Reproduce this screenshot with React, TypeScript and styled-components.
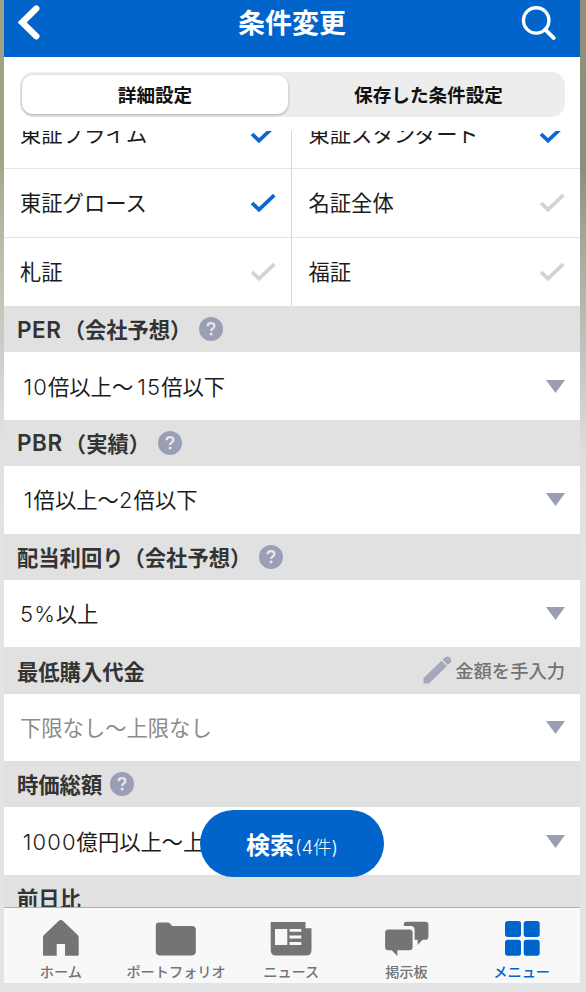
import React from 'react';
import styled, { createGlobalStyle } from 'styled-components';

const GlobalStyle = createGlobalStyle`
  *, *::before, *::after { box-sizing: border-box; }
  body {
    margin: 0;
    font-family: "Noto Sans CJK JP", sans-serif;
    color: #1c1c1c;
    overflow: hidden;
  }
`;

const Backdrop = styled.div`
  display: flex;
  justify-content: center;
  width: 586px;
  height: 992px;
  padding: 0 6px 9px 4px;
  background:
    linear-gradient(#a0a183 0, #a0a183 150px, #b4bba4 230px, #c6cdc4 340px, #dfe1e0 430px, rgba(226, 227, 228, 0) 560px) left / 4px 100% no-repeat,
    linear-gradient(#8d927d 0, #8b907c 170px, #a3a999 240px, #bec2ba 345px, #dddedc 450px, rgba(226, 227, 228, 0) 560px) right / 6px 100% no-repeat,
    #e3e4e5;
`;

const Phone = styled.div`
  position: relative;
  display: flex;
  flex-direction: column;
  width: 576px;
  height: 983px;
  background: #fff;
  overflow: hidden;
`;

const Header = styled.header`
  display: grid;
  grid-template-columns: 60px 1fr 60px;
  align-items: center;
  flex: none;
  height: 57px;
  padding-bottom: 12px;
  background: #0064cb;
  color: #fff;
`;

const Title = styled.h1`
  margin: 0;
  font-size: 27px;
  line-height: 43px;
  padding-bottom: 2px;
  font-weight: 700;
  text-align: center;
`;

const HeaderButton = styled.button<{ $end?: boolean }>`
  display: flex;
  justify-content: ${p => (p.$end ? 'flex-end' : 'flex-start')};
  height: 45px;
  padding: ${p => (p.$end ? '0 24px 0 0' : '0 0 0 14px')};
  border: 0;
  background: none;
  color: inherit;
`;

const Segments = styled.div`
  display: grid;
  grid-template-columns: 266px 1fr;
  flex: none;
  width: 545px;
  height: 45px;
  margin: 15px 0 14px 16px;
  padding: 3px 2px;
  border-radius: 14px;
  background: #ededed;
`;

const Segment = styled.button<{ $active?: boolean }>`
  height: 39px;
  padding: ${p => (p.$active ? '0 0 1px' : '0 0 1px 6px')};
  border: 0;
  border-radius: 11px;
  background: ${p => (p.$active ? '#fff' : 'transparent')};
  box-shadow: ${p => (p.$active ? '0 1px 3px rgba(0, 0, 0, 0.3)' : 'none')};
  color: #111;
  font: 700 18.6px/38px "Noto Sans CJK JP", sans-serif;
  text-align: center;
`;

const Conditions = styled.main`
  flex: 1;
  min-height: 0;
  overflow: hidden;
`;

const Scrolled = styled.div`
  margin-top: -31px;
`;

const Markets = styled.div`
  display: grid;
  grid-template-columns: 288px 1fr;
  grid-template-rows: 69px 69px 68px;
`;

const Market = styled.div`
  display: flex;
  align-items: center;
  justify-content: space-between;
  padding: 0 15px 1px 16px;
  border-bottom: 1px solid #e4e4e4;
  font-size: 21.3px;
  line-height: 32px;

  &:nth-child(odd) { border-right: 1px solid #d6d6d6; }
  &:nth-child(even) { padding-left: 16.5px; }
  &:nth-last-child(-n + 2) { border-bottom: 0; }
`;

const MarketName = styled.span`
  padding-bottom: 1px;
`;

const SectionHead = styled.h2`
  display: flex;
  align-items: center;
  height: 46.3px;
  margin: 0;
  padding: 0 15px 0 13px;
  background: #e1e1e1;
  color: #333;
  font-size: 21.3px;
  line-height: 32px;
  font-weight: 700;
`;

const Code = styled.span`
  margin-right: 2px;
  padding-top: 1px;
  font-family: Inter, "Noto Sans CJK JP", sans-serif;
  font-size: 22.5px;
  font-weight: 600;
  letter-spacing: 0.6px;
`;

const Digits = styled.span<{ $width: number }>`
  display: inline-block;
  width: ${p => p.$width}px;
  font-family: Inter, "Noto Sans CJK JP", sans-serif;
  font-size: 22px;
  font-weight: 300;
  letter-spacing: 1.1px;
  text-align: right;
  white-space: nowrap;
`;

const HelpIcon = styled.svg`
  flex: none;
  margin-left: 8px;
`;

const ManualEntry = styled.span`
  display: flex;
  align-items: center;
  gap: 3px;
  margin-left: auto;
  padding-bottom: 1px;
  color: #737373;
  font-size: 18.3px;
  font-weight: 500;
`;

const Value = styled.div<{ $muted?: boolean }>`
  display: flex;
  align-items: center;
  justify-content: space-between;
  height: 67.5px;
  padding: 0 15px 0 16px;
  color: ${p => (p.$muted ? '#8c8c8c' : '#1c1c1c')};
  font-size: 21.3px;
  line-height: 32px;
`;

const SearchButton = styled.button`
  position: absolute;
  left: 196px;
  top: 810px;
  display: flex;
  align-items: baseline;
  justify-content: center;
  width: 184px;
  height: 67px;
  padding: 0;
  border: 0;
  border-radius: 34px;
  background: #0064cb;
  color: #fff;
  font: 700 24px/67px "Noto Sans CJK JP", sans-serif;
`;

const Count = styled.span`
  margin-left: 1px;
  font-family: Inter, "Noto Sans CJK JP", sans-serif;
  font-size: 18.5px;
  font-weight: 300;
`;

const TabBar = styled.nav`
  display: grid;
  grid-template-columns: repeat(5, 1fr);
  flex: none;
  height: 76px;
  border-top: 1px solid #aeaeae;
  background: #f8f8f8;
`;

const Tab = styled.a<{ $active?: boolean }>`
  display: flex;
  flex-direction: column;
  align-items: center;
  padding-top: 11px;
  color: ${p => (p.$active ? '#0064cb' : '#747474')};
  font-size: 14.2px;
  line-height: 20px;
  font-weight: 500;
  white-space: nowrap;
`;

const TabIcon = styled.svg`
  display: block;
  flex: none;
  margin-bottom: 3px;
  overflow: visible;
`;

const TabLabel = styled.span`
  margin-right: 1.5px;
`;

const Check = ({ on }: { on: boolean }) => (
  <svg width="26" height="20" viewBox="0 0 26 20" fill="none">
    <path d="M2 10L9 16.7L24.3 2.2" stroke={on ? '#0a68d2' : '#d3d3d3'} strokeWidth="3.7" />
  </svg>
);

const Help = () => (
  <HelpIcon width="24" height="24" viewBox="0 0 24 24">
    <circle cx="12" cy="12" r="12" fill="#9a9fb6" />
    <path d="M8.6 9.2C8.7 7.1 10 6.1 12 6.1s3.4 1.1 3.4 2.9c0 2.4-3.3 2.5-3.3 5.1" fill="none" stroke="#e6e6ea" strokeWidth="2.3" />
    <circle cx="12.1" cy="17.1" r="1.5" fill="#e6e6ea" />
  </HelpIcon>
);

const Arrow = () => (
  <svg width="19" height="13" viewBox="0 0 19 13">
    <path d="M0 0H19L9.5 13Z" fill="#999eb5" />
  </svg>
);

const Pencil = () => (
  <svg width="29" height="28" viewBox="0 0 29 28" fill="#a3a8bb">
    <path d="M0.5 22L18.5 4.8L23.8 10.1L6 27.5H0.5Z" />
    <path d="M19.6 3.8L22.2 1.3Q24.5-.5 26.7 1.6L27.2 2.1Q29.3 4.3 27.5 6.4L24.8 9.1Z" />
  </svg>
);

const tabs = [
  {
    label: 'ホーム',
    icon: (
      <path d="M3 18.5Q3 17 4 16L18.6 2Q20.8 .1 23 2L37.7 16Q38.7 17 38.7 18.5V35.7Q38.7 36.7 37.7 36.7H25V25H16.7V36.7H4Q3 36.7 3 35.7Z" />
    ),
  },
  {
    label: 'ポートフォリオ',
    icon: <path d="M4 3.4H12.5Q14.2 3.4 15.2 4.8L17.2 7H37Q40.8 7 40.8 10.7V32.6Q40.8 36.4 37 36.4H4.6Q.8 36.4 .8 32.6V6.6Q.8 3.4 4 3.4Z" />,
  },
  {
    label: 'ニュース',
    icon: (
      <>
        <path d="M.7 3H35.5V9.3H41.5V31Q41.5 36.5 36.3 36.5H5.9Q.7 36.5 .7 31Z" />
        <path d="M5 10H17.3V26H5Z M19.5 10H31.3V12.8H19.5Z M19.5 16.4H31.3V19.4H19.5Z M19.5 23H31.3V26H19.5Z" fill="#f8f8f8" />
      </>
    ),
  },
  {
    label: '掲示板',
    icon: (
      <g transform="translate(-0.9 0.2)">
        <path d="M21.2 2.5H40Q43.3 2.5 43.3 5.8V17.5Q43.3 20.6 40 20.6H37.6L32.5 25.8V20.6H29.5V11Q29.5 6.8 25.5 6.8H18.7V5Q18.7 2.5 21.2 2.5Z" />
        <path d="M3.2 10.3H24.3Q27.5 10.3 27.5 13.5V27.8Q27.5 31 24.3 31H12.3V36.7L6.5 31H3.2Q0 31 0 27.8V13.5Q0 10.3 3.2 10.3Z" />
      </g>
    ),
  },
  {
    label: 'メニュー',
    active: true,
    icon: (
      <>
        <rect x="4" y="2" width="16" height="16" rx="2.7" />
        <rect x="22.7" y="2" width="16" height="16" rx="2.7" />
        <rect x="4" y="20.7" width="16" height="16" rx="2.7" />
        <rect x="22.7" y="20.7" width="16" height="16" rx="2.7" />
      </>
    ),
  },
];

const markets = [
  { name: '東証プライム', on: true },
  { name: '東証スタンダード', on: true },
  { name: '東証グロース', on: true },
  { name: '名証全体', on: false },
  { name: '札証', on: false },
  { name: '福証', on: false },
];

export default function App() {
  return (
    <>
      <GlobalStyle />
      <Backdrop>
        <Phone>
          <Header>
            <HeaderButton aria-label="戻る">
              <svg width="26" height="45" viewBox="0 0 26 45" fill="none">
                <path d="M18.3 8.5L4.2 22.4L18.3 36.3" stroke="#fff" strokeWidth="6.3" strokeLinecap="round" />
              </svg>
            </HeaderButton>
            <Title>条件変更</Title>
            <HeaderButton $end aria-label="検索">
              <svg width="36" height="45" viewBox="0 0 36 45" fill="none" stroke="#fff" strokeWidth="3.4" strokeLinecap="round">
                <circle cx="16.2" cy="20.4" r="12.7" />
                <path d="M25.3 29.7L33.6 37.9" strokeWidth="4" />
              </svg>
            </HeaderButton>
          </Header>

          <Segments>
            <Segment $active>詳細設定</Segment>
            <Segment>保存した条件設定</Segment>
          </Segments>

          <Conditions>
            <Scrolled>
              <Markets>
                {markets.map(m => (
                  <Market key={m.name}>
                    <MarketName>{m.name}</MarketName>
                    <Check on={m.on} />
                  </Market>
                ))}
              </Markets>

              <SectionHead><Code>PER</Code>（会社予想）<Help /></SectionHead>
              <Value>
                <span><Digits $width={28}>10</Digits>倍以上〜<Digits $width={28}>15</Digits>倍以下</span>
                <Arrow />
              </Value>

              <SectionHead><Code>PBR</Code>（実績）<Help /></SectionHead>
              <Value>
                <span><Digits $width={13.6}>1</Digits>倍以上〜<Digits $width={14.8}>2</Digits>倍以下</span>
                <Arrow />
              </Value>

              <SectionHead>配当利回り（会社予想）<Help /></SectionHead>
              <Value>
                <span><Digits $width={35.8}>5%</Digits>以上</span>
                <Arrow />
              </Value>

              <SectionHead>
                最低購入代金
                <ManualEntry><Pencil />金額を手入力</ManualEntry>
              </SectionHead>
              <Value $muted>
                下限なし〜上限なし
                <Arrow />
              </Value>

              <SectionHead>時価総額<Help /></SectionHead>
              <Value>
                <span><Digits $width={56.6}>1000</Digits>億円以上〜上限なし</span>
                <Arrow />
              </Value>

              <SectionHead>前日比</SectionHead>
            </Scrolled>
          </Conditions>

          <TabBar>
            {tabs.map(t => (
              <Tab key={t.label} $active={t.active}>
                <TabIcon width="43" height="39" viewBox="0 0 43 39" fill="currentColor">{t.icon}</TabIcon>
                <TabLabel>{t.label}</TabLabel>
              </Tab>
            ))}
          </TabBar>

          <SearchButton>検索<Count>(4件)</Count></SearchButton>
        </Phone>
      </Backdrop>
    </>
  );
}
